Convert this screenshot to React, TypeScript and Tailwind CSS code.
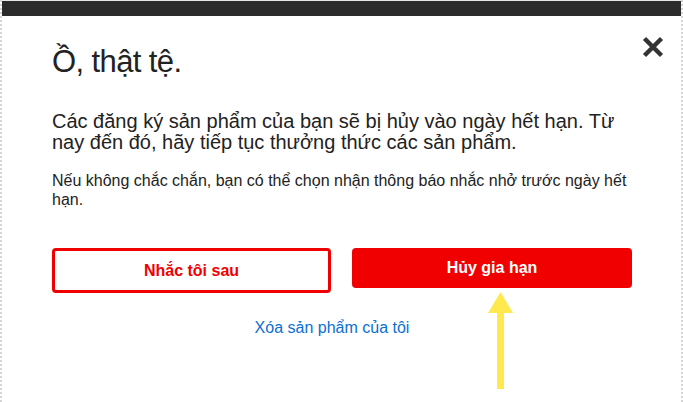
import React from "react";

export default function App() {
  return (
    <div
      className="relative h-[402px] w-[683px] overflow-hidden bg-white border-l-2 border-r-2 border-dotted border-[#d4d4d4]"
      style={{ fontFamily: '"Liberation Sans", Arial, sans-serif' }}
    >
      <div className="h-px bg-[#e6e6e6]" />
      <div className="h-[15px] bg-[#2b2b2b]" />

      <button
        aria-label="Đóng"
        className="absolute left-[639px] top-[35px] flex h-[24px] w-[24px] items-center justify-center"
      >
        <svg width="22" height="22" viewBox="0 0 22 22">
          <path d="M2.5 2.5 L19.5 19.5 M19.5 2.5 L2.5 19.5" stroke="#333" strokeWidth="4.5" strokeLinecap="butt" />
        </svg>
      </button>

      <div className="pl-[50px] pr-[49px]">
        <h1 className="mt-[28px] text-[31px] leading-[36px] tracking-[-0.6px] text-[#222]">Ồ, thật tệ.</h1>

        <p className="mt-[31px] text-[20px] leading-[21px] text-[#222]">
          Các đăng ký sản phẩm của bạn sẽ bị hủy vào ngày hết hạn. Từ nay đến đó, hãy tiếp tục thưởng thức các sản phẩm.
        </p>

        <p className="mt-[18px] text-[16px] leading-[19px] text-[#222]">
          Nếu không chắc chắn, bạn có thể chọn nhận thông báo nhắc nhở trước ngày hết hạn.
        </p>

        <div className="mt-[39px] flex items-start gap-[21px]">
          <button className="flex h-[45px] w-[279px] items-center justify-center rounded-[4px] border-[3px] border-[#f00000] bg-white text-[16px] font-bold text-[#f00000]">
            Nhắc tôi sau
          </button>
          <button className="flex h-[40px] w-[280px] items-center justify-center rounded-[4px] bg-[#f00000] text-[16px] font-bold text-white">
            Hủy gia hạn
          </button>
        </div>

        <div className="mt-[25px] flex justify-center pr-[20px]">
          <a className="text-[16px] leading-[20px] text-[#0b6fd3]">Xóa sản phẩm của tôi</a>
        </div>
      </div>

      <svg
        className="absolute left-[484px] top-[291px]"
        width="29"
        height="100"
        viewBox="0 0 29 100"
      >
        <polygon points="14.5,1 27,22 2,22" fill="#ffe94f" />
        <rect x="11" y="21" width="7" height="77" fill="#ffe94f" />
      </svg>
    </div>
  );
}
